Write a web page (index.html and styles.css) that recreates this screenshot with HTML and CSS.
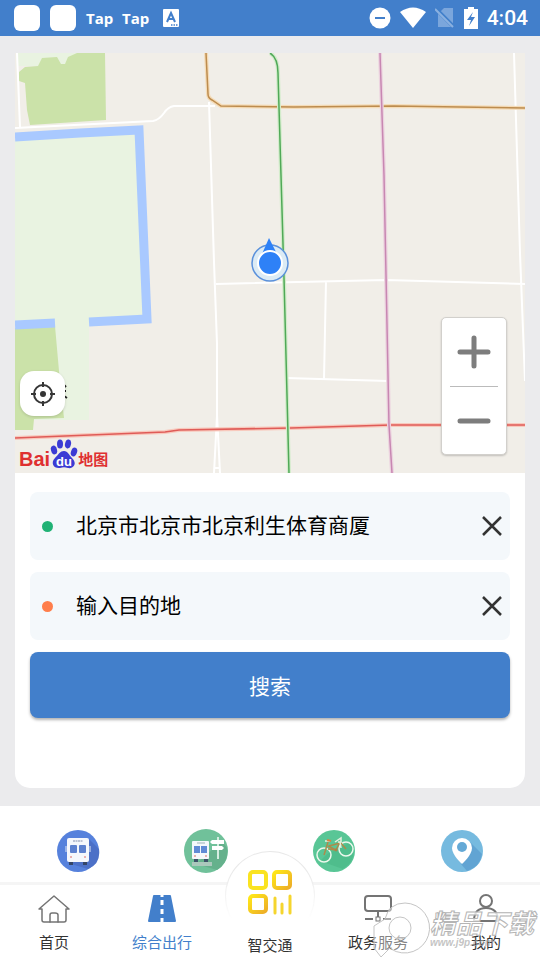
FILE: index.html
```
<!DOCTYPE html>
<html lang="zh-CN">
  <head>
    <meta charset="utf-8">
    <meta name="viewport" content="width=device-width, initial-scale=1">
    <title>综合出行</title>
    <link rel="stylesheet" href="styles.css">
  </head>
  <body>
    <header class="status-bar">
      <div class="status-left">
        <span class="app-square"></span>
        <span class="app-square"></span>
        <span class="tap">Tap</span>
        <span class="tap">Tap</span>
        <svg class="input-icon" width="16" height="18" viewBox="0 0 16 18">
          <rect width="16" height="18" rx="1" fill="#fff"/>
          <path d="M4 13L8 4l4 9M5.500 10h5" fill="none" stroke="#427fcb" stroke-width="2"/>
          <path d="M8 16h7" stroke="#427fcb" stroke-width="1.500" stroke-dasharray="1.500 1"/>
        </svg>
      </div>
      <div class="status-right">
        <svg width="22" height="22" viewBox="0 0 22 22">
          <circle cx="11" cy="11" r="10.500" fill="#fff"/>
          <path d="M6 11h10" stroke="#427fcb" stroke-width="2"/>
        </svg>
        <svg width="26" height="22" viewBox="0 0 26 22">
          <path d="M0 5Q13-4 26 5L13 21z" fill="#fff"/>
        </svg>
        <svg width="20" height="22" viewBox="0 0 20 22">
          <path d="M9 1h9v19H3V7z" fill="#7ba6dc"/>
          <path d="M0 1l19 19" stroke="#427fcb" stroke-width="4"/>
          <path d="M0 2l18 18" stroke="#8bb1e0" stroke-width="2"/>
        </svg>
        <svg width="14" height="22" viewBox="0 0 14 22">
          <path d="M4 0h6v2h4v20H0V2h4z" fill="#fff"/>
          <path d="M9 5l-6 8h4l-2 6 6-9H7z" fill="#427fcb"/>
        </svg>
        <span class="clock">4:04</span>
      </div>
    </header>

    <main class="main">
      <div class="card">
        <section class="map">
          <svg class="map-canvas" viewBox="15 53 510 420" preserveAspectRatio="xMidYMid slice">
            <rect x="-500" y="53" width="1600" height="420" fill="#f1eee8"/>
            <!-- parks -->
            <path d="M18 53h60l-9 13H18z" fill="#e9f3e1"/>
            <path d="M19 72l6-5 13-1 4-8 15-1 4 7h4l3-7 9-4h28l1 67-76 5-3-15-2-27-6-2z" fill="#cbe2a9"/>
            <path d="M15 139l128-7 5 187-59 5v96H15z" fill="#e9f3e1"/>
            <path d="M15 328l40-2 4 45 5 47-30 1-1 11H15z" fill="#cbe2a9"/>
            <path d="M64 370h25v50H64z" fill="#e9f3e1"/>
            <!-- river -->
            <path d="M15 137l65-4 59-3 8 189-58 3M15 325l40-2" fill="none" stroke="#a9c9ff" stroke-width="9"/>
            <!-- minor roads -->
            <g fill="none" stroke="#fff" stroke-width="2">
              <path d="M17 53l3 74M15 128l138-7q6-1 11-8 4-6 10-7h41"/>
              <path d="M209 102l5 160 3 82v72l-3 57M217 415l3 58M214 468h6"/>
              <path d="M216 284l170-4 139 4M326 281l-2 98M286 378l102 3M514 53l6 200 5 128"/>
            </g>
            <!-- main roads and metro lines -->
            <g fill="none">
              <path d="M206 53l2 41q0 4 4 6l9 6 73 1 100-1 131 2" stroke="#f5dcb8" stroke-width="4"/>
              <path d="M206 53l2 41q0 4 4 6l9 6 73 1 100-1 131 2" stroke="#bd8c4e" stroke-width="1.500"/>
              <path d="M15 438l150-6 14-2 112-2 100-3h134" stroke="#f8c9bd" stroke-width="4"/>
              <path d="M15 438l150-6 14-2 112-2 100-3h134" stroke="#df5b57" stroke-width="1.500"/>
              <path d="M270 53q8 5 8 20l6 205 5 195" stroke="#d3eccb" stroke-width="4"/>
              <path d="M270 53q8 5 8 20l6 205 5 195" stroke="#50a957" stroke-width="1.500"/>
              <path d="M380 53l4 122 5 250 3 48" stroke="#ecd3df" stroke-width="4"/>
              <path d="M380 53l4 122 5 250 3 48" stroke="#c887b2" stroke-width="1.500"/>
            </g>
            <path d="M64 385l2 2M64 391h2M64 396l3 2" stroke="#222" stroke-width="2"/>
            <!-- current position -->
            <circle cx="270" cy="263" r="18" fill="#dcebf5" stroke="#5b91db" stroke-width="1.500"/>
            <path d="M269 238l8 16h-15z" fill="#2e81f7"/>
            <circle cx="270" cy="263" r="12" fill="#2e81f7" stroke="#fff" stroke-width="2"/>
          </svg>
          <button class="locate" type="button" aria-label="定位">
            <svg width="24" height="24" viewBox="0 0 24 24" fill="none" stroke="#353535" stroke-width="2">
              <circle cx="12" cy="12" r="9"/>
              <circle cx="12" cy="12" r="3" fill="#353535" stroke="none"/>
              <path d="M12 0v5M12 19v5M0 12h5M19 12h5"/>
            </svg>
          </button>
          <div class="map-logo">
            <span>Bai</span>
            <svg width="28" height="30" viewBox="0 0 28 30">
              <g fill="#3b3bd4">
                <ellipse cx="4" cy="11" rx="3" ry="4.500" transform="rotate(-15 4 11)"/>
                <ellipse cx="10" cy="5" rx="3" ry="4.500"/>
                <ellipse cx="18" cy="5" rx="3" ry="4.500" transform="rotate(12 18 5)"/>
                <ellipse cx="24" cy="13" rx="3" ry="4.500" transform="rotate(20 24 13)"/>
                <path d="M14 12c4 0 5 4 8 7 6 6 1 11-4 10-3-1-5-1-8 0-6 1-10-5-5-10 4-4 5-7 9-7z"/>
              </g>
              <text class="logo-du" x="14" y="27" text-anchor="middle">du</text>
            </svg>
            <span class="logo-map">地图</span>
          </div>
          <div class="zoom">
            <button type="button" aria-label="放大">
              <svg width="34" height="34" viewBox="0 0 34 34">
                <path d="M3 17h28M17 3v28" stroke="#7d7d7d" stroke-width="5" stroke-linecap="round"/>
              </svg>
            </button>
            <button type="button" aria-label="缩小">
              <svg width="34" height="34" viewBox="0 0 34 34">
                <path d="M3 17h28" stroke="#7d7d7d" stroke-width="5" stroke-linecap="round"/>
              </svg>
            </button>
          </div>
        </section>

        <form class="route-form">
          <div class="field">
            <label class="dot dot-start" for="start" aria-label="起点"></label>
            <input id="start" type="text" value="北京市北京市北京利生体育商厦">
            <button class="clear" type="button" aria-label="清除起点">
              <svg width="20" height="20" viewBox="0 0 20 20"><path d="M1 1l18 18M19 1L1 19" stroke="#333" stroke-width="2.500"/></svg>
            </button>
          </div>
          <div class="field">
            <label class="dot dot-end" for="end" aria-label="终点"></label>
            <input id="end" type="text" placeholder="输入目的地">
            <button class="clear" type="button" aria-label="清除终点">
              <svg width="20" height="20" viewBox="0 0 20 20"><path d="M1 1l18 18M19 1L1 19" stroke="#333" stroke-width="2.500"/></svg>
            </button>
          </div>
          <button class="search" type="button">搜索</button>
        </form>
      </div>
    </main>

    <section class="shortcuts">
      <a href="#" aria-label="公交">
        <svg width="44" height="44" viewBox="0 0 44 44">
          <circle cx="22" cy="22" r="21" fill="#5681dc"/>
          <path d="M33 10l10 10q2 15-11 20L12 34z" fill="#4c70c7"/>
          <path d="M13 32h4v4h-4zM27 32h4v4h-4z" fill="#344567"/>
          <rect x="11" y="9" width="22" height="24" rx="2" fill="#f5f7fc"/>
          <path d="M17 12h10" stroke="#a9b3c7" stroke-width="1.500" stroke-dasharray="2 .5"/>
          <rect x="14" y="16" width="7" height="8" rx="1" fill="#5c80cf"/>
          <rect x="23" y="16" width="7" height="8" rx="1" fill="#5c80cf"/>
          <path d="M10 17v6M34 17v6" stroke="#dfe6f4" stroke-width="1"/>
          <circle cx="15" cy="28" r="1" fill="#e69898"/><circle cx="29" cy="28" r="1" fill="#e69898"/>
        </svg>
      </a>
      <a href="#" aria-label="站点">
        <svg width="44" height="44" viewBox="0 0 44 44">
          <circle cx="22" cy="22" r="22" fill="#70c19a"/>
          <path d="M38 12l5 7q2 15-10 22L12 35z" fill="#65b18c"/>
          <path d="M8 35h20" stroke="#abc8bc" stroke-width="4"/>
          <path d="M10 29h4v4h-4zM20 29h4v4h-4z" fill="#3d5269"/>
          <rect x="8" y="12" width="17" height="18" rx="1" fill="#f4f8fb"/>
          <path d="M13 14h8" stroke="#9fb3b7"/>
          <path d="M10 17h6v7h-6zM17 17h6v7h-6z" fill="#608bd5"/>
          <circle cx="11" cy="27" r="1" fill="#e69898"/><circle cx="22" cy="27" r="1" fill="#e69898"/>
          <path d="M34 8v22" stroke="#d6ede1" stroke-width="2"/>
          <path d="M28 11h12v4H28l-2-2zM28 17h10l2 2-2 2H28z" fill="#fff"/>
        </svg>
      </a>
      <a href="#" aria-label="骑行">
        <svg width="44" height="44" viewBox="0 0 44 44">
          <circle cx="22" cy="22" r="21" fill="#59c696"/>
          <path d="M39 13q8 17-8 27L8 32l7-7z" fill="#4fbd8c"/>
          <g fill="none">
            <circle cx="12" cy="26" r="7" stroke="#ecf8ec" stroke-width="1.500"/>
            <circle cx="34" cy="20" r="7" stroke="#ecf8ec" stroke-width="1.500"/>
            <path d="M12 26l4-13M16 17l8 4 4-8 6 7M17 17l11-3M24 21l-8-1" stroke="#ad8b4b" stroke-width="1.500"/>
            <path d="M13 12h5M23 13l6-4v4h-3M28 13l1 6" stroke="#e3f0df" stroke-width="1.500"/>
            <path d="M15 11l4 1" stroke="#d88445" stroke-width="2"/>
            <circle cx="24" cy="21" r="1" stroke="#b77b44"/>
          </g>
        </svg>
      </a>
      <a href="#" aria-label="附近">
        <svg width="44" height="44" viewBox="0 0 44 44">
          <circle cx="22" cy="22" r="21" fill="#76badf"/>
          <path d="M30 13l12 12q-2 13-15 17l-6-7z" fill="#61a4d3"/>
          <path d="M22 9a10 10 0 0 0-10 10c0 7 10 16 10 16s10-9 10-16a10 10 0 0 0-10-10z" fill="#fff"/>
          <circle cx="22" cy="18" r="5" fill="#64a9d6"/>
        </svg>
      </a>
    </section>

    <nav class="tab-bar">
      <a href="#" class="tab">
        <svg width="32" height="30" viewBox="0 0 32 30" fill="none" stroke="#747474" stroke-width="1.500" stroke-linejoin="round" stroke-linecap="round">
          <path d="M1 15L16 2l15 13h-3v11q0 2-2 2H6q-2 0-2-2V15z"/>
          <path d="M12 28v-7q0-2 2-2h3q3 0 3 2v7"/>
        </svg>
        <span>首页</span>
      </a>
      <a href="#" class="tab tab-active">
        <svg width="32" height="30" viewBox="0 0 32 30">
          <path d="M8 1h16q1 0 1 1l5 25q0 1-1 1H3q-1 0-1-1L7 2q0-1 1-1z" fill="#427fcb"/>
          <path d="M16 1v2M16 6v5M16 15v5M16 24v4" stroke="#fff" stroke-width="3"/>
        </svg>
        <span>综合出行</span>
      </a>
      <a href="#" class="tab tab-center">
        <span class="center-circle">
          <svg width="46" height="46" viewBox="0 0 46 46" fill="none" stroke-width="4">
            <defs>
              <linearGradient id="gold" x1="0" y1="0" x2="1" y2="1">
                <stop offset="0" stop-color="#ffe718"/>
                <stop offset="1" stop-color="#edae28"/>
              </linearGradient>
            </defs>
            <rect x="3" y="3" width="16" height="16" rx="3" stroke="#fae321"/>
            <rect x="27" y="3" width="16" height="16" rx="3" stroke="url(#gold)"/>
            <rect x="3" y="27" width="16" height="16" rx="3" stroke="url(#gold)"/>
            <path d="M28 29v15M35 35v9M43 27v17" stroke="#f5d52e" stroke-width="3" stroke-linecap="round"/>
          </svg>
        </span>
        <span class="center-label">智交通</span>
      </a>
      <a href="#" class="tab">
        <svg width="32" height="30" viewBox="0 0 32 30" fill="none" stroke="#747474" stroke-width="2">
          <rect x="3" y="2" width="26" height="15" rx="3"/>
          <path d="M16 17v6M3 25h8M21 25h8"/>
          <rect x="14" y="23" width="4" height="4" stroke-width="1"/>
        </svg>
        <span>政务服务</span>
      </a>
      <a href="#" class="tab">
        <svg width="32" height="30" viewBox="0 0 32 30" fill="none" stroke="#747474" stroke-width="2">
          <circle cx="16" cy="7" r="6"/>
          <path d="M4 27q0-13 12-13t12 13z"/>
        </svg>
        <span>我的</span>
      </a>
      <svg class="watermark" width="168" height="62" viewBox="0 0 168 62">
        <path d="M2 28l11-7q4-16 20-16a25 25 0 1 1-14 46v-2L9 59l-7-9z" fill="#fff" fill-opacity=".4" stroke="#c5c5c5"/>
        <circle cx="28" cy="30" r="11" fill="#fff" fill-opacity=".4" stroke="#c5c5c5"/>
        <text class="mark-name" x="58" y="35">精品下载</text>
        <text class="mark-url" x="58" y="48">www.j9p.com</text>
      </svg>
    </nav>
  </body>
</html>
```
FILE: styles.css
```
* {
  box-sizing: border-box;
}

body {
  margin: 0;
  min-height: 100vh;
  display: flex;
  flex-direction: column;
  background-color: #fff;
  color: #333;
  font-family: "Liberation Sans", "Noto Sans CJK SC", sans-serif;
}

svg {
  display: block;
}

button {
  padding: 0;
  border: none;
  background: none;
  font-family: inherit;
  cursor: pointer;
}

.status-bar {
  height: 36px;
  padding: 0 12px 0 14px;
  display: flex;
  justify-content: space-between;
  align-items: center;
  background-color: #427fcb;
  color: #fff;
}

.status-left,
.status-right {
  display: flex;
  align-items: center;
  gap: 10px;
}

.status-right {
  gap: 9px;
}

.app-square {
  width: 26px;
  height: 26px;
  border-radius: 6px;
  background-color: #fff;
}

.tap {
  width: 26px;
  font: bold 15px/20px "Open Sans", sans-serif;
}

.input-icon {
  margin-left: 5px;
}

.clock {
  font: 500 21px/24px Roboto, sans-serif;
}

.main {
  padding: 17px 15px 18px;
  background-color: #ebebed;
}

.card {
  background-color: #fff;
  border-radius: 0 0 15px 15px;
}

/* Map */
.map {
  position: relative;
  height: 420px;
  overflow: hidden;
}

.map-canvas {
  width: 100%;
  height: 100%;
}

.locate {
  position: absolute;
  left: 5px;
  bottom: 57px;
  width: 45px;
  height: 45px;
  display: flex;
  align-items: center;
  justify-content: center;
  background-color: #fff;
  border-radius: 14px;
  box-shadow: 0 1px 3px rgba(0, 0, 0, 0.15);
}

.map-logo {
  position: absolute;
  left: 4px;
  bottom: 4px;
  display: flex;
  align-items: flex-end;
  color: #df3030;
  font: bold 20px/20px "Liberation Sans", sans-serif;
}

.logo-map {
  font: bold 15px/20px "Noto Sans CJK SC", sans-serif;
}

.logo-du {
  fill: #fff;
  font: bold 13px "Liberation Sans", sans-serif;
}

.zoom {
  position: absolute;
  right: 18px;
  bottom: 18px;
  width: 66px;
  padding: 0 8px;
  background-color: #fff;
  border: 1px solid #d2d0cc;
  border-radius: 5px;
  box-shadow: 0 1px 2px rgba(0, 0, 0, 0.2);
}

.zoom button {
  width: 100%;
  height: 68px;
  display: flex;
  align-items: center;
  justify-content: center;
}

.zoom button + button {
  border-top: 1px solid #bbb;
}

/* Route form */
.route-form {
  padding: 19px 15px 70px;
  display: flex;
  flex-direction: column;
  gap: 12px;
}

.field {
  height: 68px;
  padding: 0 8px 0 12px;
  display: flex;
  align-items: center;
  background-color: #f4f8fb;
  border-radius: 8px;
}

.dot {
  width: 11px;
  height: 11px;
  border-radius: 50%;
}

.dot-start {
  background-color: #20b275;
}

.dot-end {
  background-color: #ff7e4b;
}

.field input {
  flex: 1;
  min-width: 0;
  margin-left: 23px;
  padding: 0;
  border: none;
  outline: none;
  background: none;
  color: #000;
  font-family: inherit;
  font-size: 21px;
  line-height: 32px;
}

.field input::placeholder {
  color: #000;
  opacity: 1;
}

.search {
  height: 66px;
  background-color: #427fcb;
  color: #fff;
  border-radius: 8px;
  box-shadow: 0 2px 3px rgba(0, 0, 0, 0.3);
  font-size: 21px;
}

/* Shortcuts */
.shortcuts {
  height: 76px;
  padding: 14px 14px 0;
  display: grid;
  grid-template-columns: repeat(4, 1fr);
  align-items: center;
  justify-items: center;
}

/* Bottom tabs */
.tab-bar {
  position: relative;
  flex: 1;
  min-height: 78px;
  display: grid;
  grid-template-columns: repeat(5, 1fr);
  border-top: 3px solid #f5f5f5;
}

.tab {
  padding-top: 9px;
  display: flex;
  flex-direction: column;
  align-items: center;
  gap: 8px;
  color: #333;
  font-size: 15px;
  line-height: 22px;
  text-decoration: none;
}

.tab-active {
  color: #427fcb;
}

.tab-center {
  position: relative;
  padding-top: 50px;
}

.center-circle {
  position: absolute;
  top: -34px;
  width: 90px;
  height: 90px;
  display: flex;
  align-items: center;
  justify-content: center;
  padding-bottom: 9px;
  border-radius: 50%;
  background: linear-gradient(#fff, #fff) padding-box, linear-gradient(#e8e8e8 20%, #fff 75%) border-box;
  border: 1px solid transparent;
}

.center-label {
  z-index: 1;
}

.watermark {
  position: absolute;
  right: 0;
  bottom: 0;
  pointer-events: none;
}

.mark-name {
  fill: #fff;
  fill-opacity: 0.8;
  stroke: #b5b5b5;
  font: italic bold 26px "Noto Sans CJK SC", sans-serif;
}

.mark-url {
  fill: #aaa;
  fill-opacity: 0.7;
  font: italic bold 10px "Liberation Sans", sans-serif;
}
```
